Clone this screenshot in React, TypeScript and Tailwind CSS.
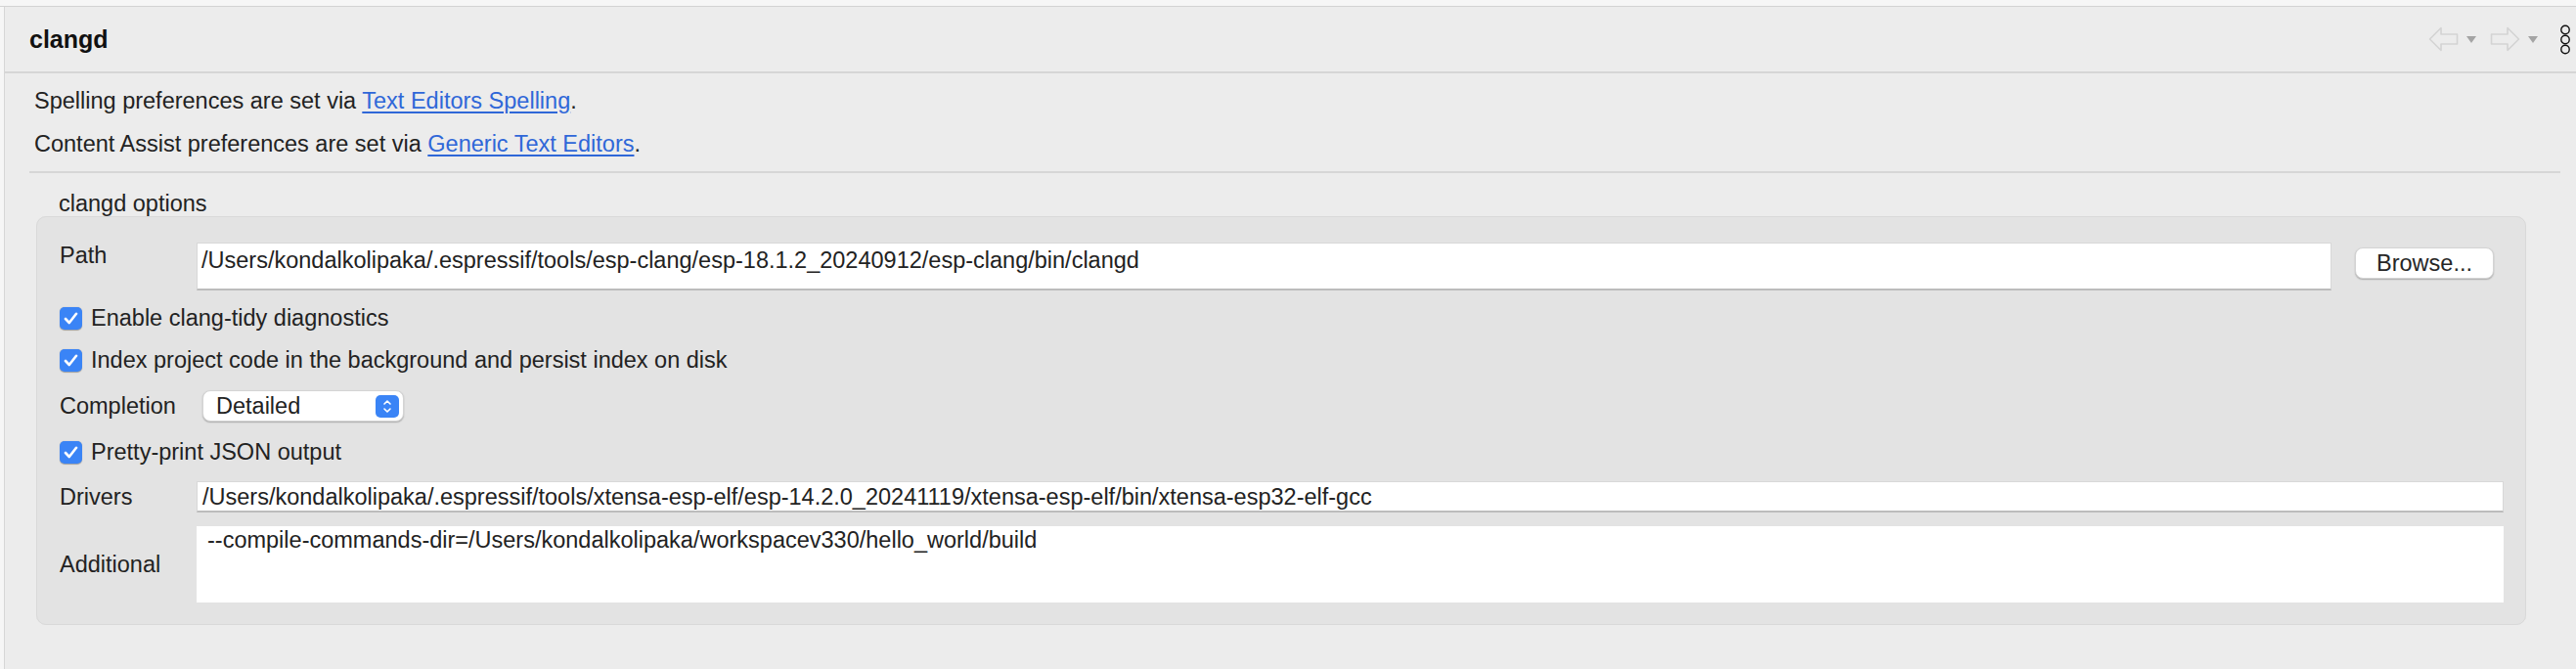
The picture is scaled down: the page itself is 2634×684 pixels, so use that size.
import React from 'react';

function BackArrow({ flip }: { flip?: boolean }) {
  return (
    <svg
      width="31"
      height="26"
      viewBox="0 0 31 26"
      aria-hidden="true"
      className={flip ? '-scale-x-100' : ''}
    >
      <path
        d="M1.5 13 L13 1.5 V8 H29.5 V18 H13 V24.5 Z"
        fill="none"
        stroke="#d3d3d3"
        strokeWidth="1.6"
        strokeLinejoin="round"
      />
    </svg>
  );
}

function DropTriangle() {
  return (
    <svg width="10" height="7" viewBox="0 0 10 7" aria-hidden="true">
      <path d="M0 0 H10 L5 7 Z" fill="#a4a4a4" />
    </svg>
  );
}

function ViewMenu() {
  return (
    <svg width="12" height="31" viewBox="0 0 12 31" aria-hidden="true">
      <circle cx="6" cy="5.5" r="4.2" fill="none" stroke="#111" strokeWidth="1.4" />
      <circle cx="6" cy="15.5" r="4.2" fill="none" stroke="#111" strokeWidth="1.4" />
      <circle cx="6" cy="25.5" r="4.2" fill="none" stroke="#111" strokeWidth="1.4" />
    </svg>
  );
}

function Checkbox({ label }: { label: string }) {
  return (
    <label className="flex h-[26px] items-center gap-[9px]">
      <span className="flex h-[23px] w-[23px] items-center justify-center rounded-[5px] bg-[#3a84f6] shadow-[0_0.5px_1px_rgba(0,0,0,0.3)]">
        <svg width="15" height="13" viewBox="0 0 15 13" aria-hidden="true">
          <path
            d="M2 7 L5.8 11 L13 1.8"
            fill="none"
            stroke="#fff"
            strokeWidth="2.6"
            strokeLinecap="round"
            strokeLinejoin="round"
          />
        </svg>
      </span>
      <span>{label}</span>
    </label>
  );
}

function Stepper() {
  return (
    <span className="flex h-[23px] w-[24px] items-center justify-center rounded-[5px] bg-[#3a84f6]">
      <svg width="10" height="15" viewBox="0 0 10 15" aria-hidden="true">
        <path d="M2 5 L5 2 L8 5" fill="none" stroke="#fff" strokeWidth="1.6" strokeLinecap="round" strokeLinejoin="round" />
        <path d="M2 10 L5 13 L8 10" fill="none" stroke="#fff" strokeWidth="1.6" strokeLinecap="round" strokeLinejoin="round" />
      </svg>
    </span>
  );
}

export default function App() {
  return (
    <div className="flex h-[684px] w-full flex-col overflow-hidden bg-[#f6f6f6] font-['Liberation_Sans',Arial,sans-serif] text-[23.5px] leading-[26px] text-[#222]">
      <div className="h-[7px] shrink-0 border-b border-[#d3d3d3] bg-[#f6f6f6]" />
      <div className="flex flex-1">
        <div className="w-[5px] shrink-0 border-r border-[#d6d6d6] bg-[#f6f6f6]" />
        <main className="flex flex-1 flex-col bg-[#ececec]">
          <header className="flex h-[68px] shrink-0 items-center justify-between border-b-2 border-[#d6d6d6] pl-[25px] pr-[5px]">
            <h1 className="text-[25px] font-bold text-[#111]">clangd</h1>
            <div className="flex items-center">
              <BackArrow />
              <span className="ml-[8px]"><DropTriangle /></span>
              <span className="ml-[14px]"><BackArrow flip /></span>
              <span className="ml-[8px]"><DropTriangle /></span>
              <span className="ml-[22px]"><ViewMenu /></span>
            </div>
          </header>

          <section className="pl-[30px] pt-[15px]">
            <p>
              Spelling preferences are set via{' '}
              <a className="text-[#2f67d8] underline underline-offset-[3px]" href="#">Text Editors Spelling</a>.
            </p>
            <p className="mt-[18px]">
              Content Assist preferences are set via{' '}
              <a className="text-[#2f67d8] underline underline-offset-[3px]" href="#">Generic Text Editors</a>.
            </p>
          </section>

          <div className="ml-[25px] mr-[16px] mt-[15px] h-[2px] bg-[#d6d6d6]" />

          <div className="ml-[55px] mt-[18px]">clangd options</div>

          <fieldset className="ml-[32px] mr-[51px] flex flex-col rounded-[10px] border border-[#d9d9d9] bg-[#e3e3e3] pb-[22px] pl-[23px] pr-[22px] pt-[26px]">
            <div className="flex items-start">
              <span className="w-[140px] shrink-0">Path</span>
              <div className="h-[49px] flex-1 border border-b-2 border-[#d8d8d8] border-b-[#bcbcbc] bg-white pl-[4px] pt-[4px]">
                /Users/kondalkolipaka/.espressif/tools/esp-clang/esp-18.1.2_20240912/esp-clang/bin/clangd
              </div>
              <button
                type="button"
                className="ml-[24px] mr-[10px] mt-[5px] h-[32px] w-[142px] rounded-[8px] border border-[#d4d4d4] bg-white text-[#262626] shadow-[0_1px_1.5px_rgba(0,0,0,0.25)]"
              >
                Browse...
              </button>
            </div>

            <div className="mt-[15px]">
              <Checkbox label="Enable clang-tidy diagnostics" />
            </div>
            <div className="mt-[17px]">
              <Checkbox label="Index project code in the background and persist index on disk" />
            </div>

            <div className="mt-[18px] flex items-center">
              <span className="w-[146px] shrink-0">Completion</span>
              <div className="flex h-[32px] w-[206px] items-center justify-between rounded-[8px] border border-[#d4d4d4] bg-white pl-[13px] pr-[4px] shadow-[0_1px_1.5px_rgba(0,0,0,0.25)]">
                <span>Detailed</span>
                <Stepper />
              </div>
            </div>

            <div className="mt-[18px]">
              <Checkbox label="Pretty-print JSON output" />
            </div>

            <div className="mt-[17px] flex items-center">
              <span className="w-[140px] shrink-0">Drivers</span>
              <div className="flex h-[32px] flex-1 items-center border border-b-2 border-[#d8d8d8] border-b-[#bcbcbc] bg-white pl-[5px]">
                /Users/kondalkolipaka/.espressif/tools/xtensa-esp-elf/esp-14.2.0_20241119/xtensa-esp-elf/bin/xtensa-esp32-elf-gcc
              </div>
            </div>

            <div className="mt-[14px] flex items-center">
              <span className="w-[140px] shrink-0">Additional</span>
              <div className="h-[78px] flex-1 bg-white pl-[11px] pt-[1px]">
                --compile-commands-dir=/Users/kondalkolipaka/workspacev330/hello_world/build
              </div>
            </div>
          </fieldset>
        </main>
      </div>
    </div>
  );
}
